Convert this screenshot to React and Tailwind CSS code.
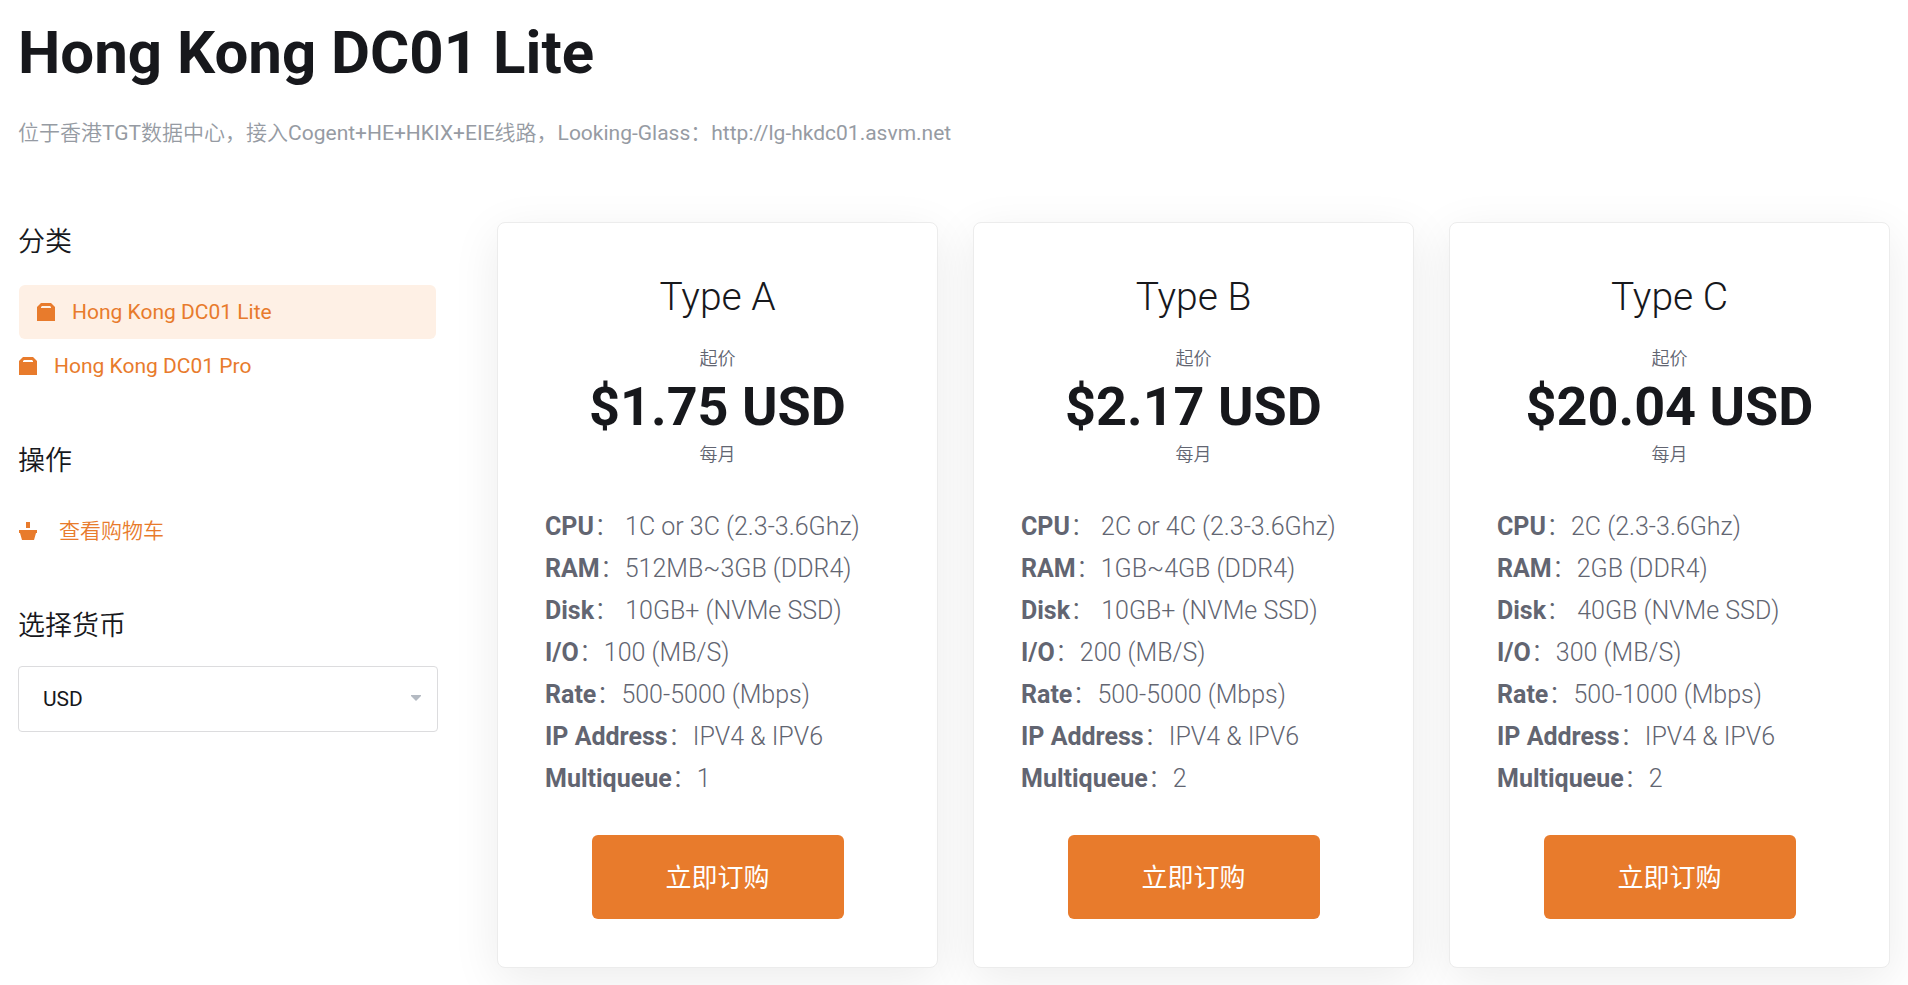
import React, { useState } from 'react';

const categories = [
  { name: 'Hong Kong DC01 Lite', active: true },
  { name: 'Hong Kong DC01 Pro', active: false }
];

const plans = [
  {
    name: 'Type A',
    price: '$1.75 USD',
    specs: [
      ['CPU', '\u00a01C or 3C (2.3-3.6Ghz)'],
      ['RAM', '512MB~3GB (DDR4)'],
      ['Disk', '\u00a010GB+ (NVMe SSD)'],
      ['I/O', '100 (MB/S)'],
      ['Rate', '500-5000 (Mbps)'],
      ['IP Address', 'IPV4 & IPV6'],
      ['Multiqueue', '1']
    ]
  },
  {
    name: 'Type B',
    price: '$2.17 USD',
    specs: [
      ['CPU', '\u00a02C or 4C (2.3-3.6Ghz)'],
      ['RAM', '1GB~4GB (DDR4)'],
      ['Disk', '\u00a010GB+ (NVMe SSD)'],
      ['I/O', '200 (MB/S)'],
      ['Rate', '500-5000 (Mbps)'],
      ['IP Address', 'IPV4 & IPV6'],
      ['Multiqueue', '2']
    ]
  },
  {
    name: 'Type C',
    price: '$20.04 USD',
    specs: [
      ['CPU', '2C (2.3-3.6Ghz)'],
      ['RAM', '2GB (DDR4)'],
      ['Disk', '\u00a040GB (NVMe SSD)'],
      ['I/O', '300 (MB/S)'],
      ['Rate', '500-1000 (Mbps)'],
      ['IP Address', 'IPV4 & IPV6'],
      ['Multiqueue', '2']
    ]
  }
];

const BoxIcon = () => (
  <svg className="w-[18px] h-[18px] shrink-0" viewBox="0 0 18 18" fill="currentColor" aria-hidden="true">
    <path fillRule="evenodd" d="M4 0h10l4 4v14H0V4zM5 3L4 4v1h10V4l-1-1z" />
  </svg>
);

const BasketIcon = () => (
  <svg className="w-[18px] h-[18px] shrink-0" viewBox="0 0 18 18" fill="currentColor" aria-hidden="true">
    <path d="M7 0h4v6H7zM0 8h18v3h-1l-2 7H3l-2-7H0z" />
  </svg>
);

const SidebarHeading = ({ children }) => (
  <h2 className="pt-0.5 text-[27px] leading-[36px] font-[350] text-[#17181c]">{children}</h2>
);

const PlanCard = ({ plan }) => (
  <div className="flex flex-col items-center rounded-lg border border-[#ececec] bg-white px-[47px] py-12 shadow-[0_12px_48px_rgba(0,0,0,0.08)]">
    <h3 className="text-[39px] leading-[52px] font-light text-[#17181c]">{plan.name}</h3>
    <div className="mt-[21px] text-lg leading-[30px] font-[350]">起价</div>
    <div className="text-[54px] leading-[66px] font-bold text-[#17181c]">{plan.price}</div>
    <div className="text-lg leading-[30px] font-[350]">每月</div>
    <ul className="mt-9 w-full text-[25px] leading-[42px] font-light whitespace-nowrap">
      {plan.specs.map(([label, value]) => (
        <li key={label}>
          <strong className="font-bold">{label}</strong>：{value}
        </li>
      ))}
    </ul>
    <button type="button" className="mt-[35px] h-[84px] w-[252px] rounded-md bg-[#e87b2c] pt-0.5 text-[26px] text-white">
      立即订购
    </button>
  </div>
);

const App = () => {
  const [currency, setCurrency] = useState('USD');

  return (
    <div className="min-h-screen overflow-hidden bg-white px-[18px] pb-[18px] text-[#626571] font-['Roboto','Noto_Sans_CJK_SC',sans-serif]">
      <header className="pt-[17px]">
        <h1 className="text-6xl leading-[72px] font-bold text-[#17181c]">Hong Kong DC01 Lite</h1>
        <p className="mt-7 text-[21px] leading-[32px] text-[#969ba3]">
          <span className="font-[350]">位于香港</span>TGT<span className="font-[350]">数据中心，接入</span>Cogent+HE+HKIX+EIE
          <span className="font-[350]">线路，</span>Looking-Glass<span className="font-[350]">：</span>http://lg-hkdc01.asvm.net
        </p>
      </header>

      <div className="mt-[73px] flex items-start gap-[59px]">
        <aside className="w-[420px] shrink-0">
          <SidebarHeading>分类</SidebarHeading>
          <nav className="mt-[25px] text-[21px] text-[#e87b2c]">
            {categories.map((item) => (
              <a
                key={item.name}
                href="#"
                className={`mr-0.5 ml-px flex h-[54px] items-center gap-[17px] rounded-md ${
                  item.active ? 'bg-[#fef0e5] px-[18px]' : ''
                }`}
              >
                <BoxIcon />
                <span className="pt-0.5">{item.name}</span>
              </a>
            ))}
          </nav>

          <div className="mt-12">
            <SidebarHeading>操作</SidebarHeading>
            <a href="#" className="mt-[25px] ml-px flex h-[54px] items-center gap-[22px] text-[21px] font-[350] text-[#e87b2c]">
              <BasketIcon />
              <span className="pt-0.5">查看购物车</span>
            </a>
          </div>

          <div className="mt-12">
            <SidebarHeading>
              <label htmlFor="currency">选择货币</label>
            </SidebarHeading>
            <div className="relative mt-[22px]">
              <select
                id="currency"
                value={currency}
                onChange={(e) => setCurrency(e.target.value)}
                className="h-[66px] w-full appearance-none rounded-sm border border-[#dcdcde] bg-white px-6 pt-0.5 text-[21px] text-[#17181c]"
              >
                <option value="USD">USD</option>
                <option value="CNY">CNY</option>
              </select>
              <svg className="pointer-events-none absolute top-[29px] right-[17px] h-1.5 w-2.5 text-[#b4bac2]" viewBox="0 0 10 6" fill="currentColor" aria-hidden="true">
                <path d="M0 0h10v1L5 6 0 1z" />
              </svg>
            </div>
          </div>
        </aside>

        <main className="grid min-w-0 flex-1 grid-cols-3 gap-[35px]">
          {plans.map((plan) => (
            <PlanCard key={plan.name} plan={plan} />
          ))}
        </main>
      </div>
    </div>
  );
};

export default App;
